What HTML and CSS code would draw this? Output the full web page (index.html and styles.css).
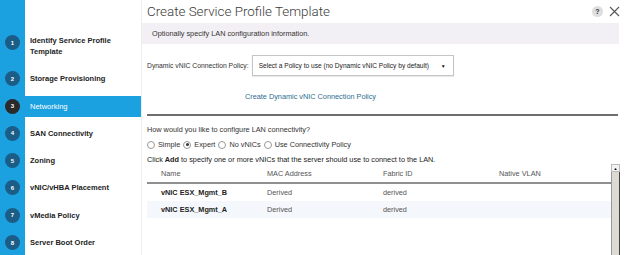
FILE: index.html
```html
<!DOCTYPE html>
<html lang="en">
<head>
  <meta charset="UTF-8" />
  <title>Create Service Profile Template</title>
  <link rel="stylesheet" href="styles.css">
</head>
<body>
  <nav class="steps">
    <div class="step step-tall"><span class="num">1</span><span class="label">Identify Service Profile<br>Template</span></div>
    <div class="step"><span class="num">2</span><span class="label">Storage Provisioning</span></div>
    <div class="step active"><span class="num">3</span><span class="label">Networking</span></div>
    <div class="step"><span class="num">4</span><span class="label">SAN Connectivity</span></div>
    <div class="step"><span class="num">5</span><span class="label">Zoning</span></div>
    <div class="step"><span class="num">6</span><span class="label">vNIC/vHBA Placement</span></div>
    <div class="step"><span class="num">7</span><span class="label">vMedia Policy</span></div>
    <div class="step"><span class="num">8</span><span class="label">Server Boot Order</span></div>
  </nav>

  <main class="wizard">
    <header class="wizard-head">
      <h1>Create Service Profile Template</h1>
      <div class="head-tools">
        <span class="help">?</span>
        <svg class="close" width="11" height="11" viewBox="0 0 11 11">
          <path d="M1 1 L10 10 M10 1 L1 10" stroke="#555" stroke-width="1.1" fill="none" />
        </svg>
      </div>
    </header>

    <div class="banner">Optionally specify LAN configuration information.</div>

    <div class="policy-row">
      <span class="policy-label">Dynamic vNIC Connection Policy:</span>
      <div class="select">
        <span>Select a Policy to use (no Dynamic vNIC Policy by default)</span>
        <span class="caret">&#9660;</span>
      </div>
    </div>

    <a class="create-link" href="#">Create Dynamic vNIC Connection Policy</a>

    <hr class="divider">

    <p class="question">How would you like to configure LAN connectivity?</p>

    <div class="radios">
      <label class="radio"><span class="dot"></span>Simple</label>
      <label class="radio"><span class="dot checked"></span>Expert</label>
      <label class="radio"><span class="dot"></span>No vNICs</label>
      <label class="radio"><span class="dot"></span>Use Connectivity Policy</label>
    </div>

    <p class="hint">Click <b>Add</b> to specify one or more vNICs that the server should use to connect to the LAN.</p>

    <div class="table-wrap">
      <div class="table">
        <div class="row head">
          <span>Name</span><span>MAC Address</span><span>Fabric ID</span><span>Native VLAN</span>
        </div>
        <div class="row">
          <span class="name">vNIC ESX_Mgmt_B</span><span>Derived</span><span>derived</span><span></span>
        </div>
        <div class="row alt">
          <span class="name">vNIC ESX_Mgmt_A</span><span>Derived</span><span>derived</span><span></span>
        </div>
      </div>
      <div class="scrollbar">
        <span class="arrow">&#9650;</span>
        <span class="track"></span>
      </div>
    </div>
  </main>
</body>
</html>
```

FILE: styles.css
```css
* {
  margin: 0;
  padding: 0;
  box-sizing: border-box;
}

body {
  font-family: 'Liberation Sans', Arial, sans-serif;
  font-size: 7.3px;
  color: #333;
  background: #fff;
  width: 625px;
  height: 255px;
  overflow: hidden;
  display: flex;
}

/* left wizard steps */
.steps {
  width: 142px;
  flex-shrink: 0;
  background: linear-gradient(to right, #1ba0e0 25px, #fff 25px);
  padding-top: 30px;
  display: flex;
  flex-direction: column;
  gap: 6.3px;
  border-right: 1px solid #eee;
}

.step {
  display: flex;
  align-items: center;
  min-height: 21px;
  font-weight: bold;
  font-size: 7.5px;
  color: #222;
}

.step-tall {
  padding: 5px 0;
  align-items: flex-start;
}

.step .num {
  width: 15px;
  height: 15px;
  border-radius: 50%;
  background: #1b5d86;
  color: #fff;
  font-size: 6px;
  display: flex;
  align-items: center;
  justify-content: center;
  margin: 0 10px 0 5px;
  flex-shrink: 0;
}

.step .label {
  line-height: 11px;
}

.step.active {
  background: #1ba0e0;
}

.step.active .num {
  background: #2a2a2a;
}

.step.active .label {
  color: #fff;
  font-weight: normal;
}

/* main panel */
.wizard {
  flex: 1;
  display: flex;
  flex-direction: column;
  padding-left: 5px;
}

.wizard-head {
  height: 23px;
  display: flex;
  align-items: center;
  justify-content: space-between;
  padding-right: 5px;
}

.wizard-head h1 {
  font-family: Roboto, 'Liberation Sans', sans-serif;
  font-weight: 300;
  font-size: 13.4px;
  color: #3a3a3a;
}

.head-tools {
  display: flex;
  align-items: center;
  gap: 6px;
}

.help {
  width: 11px;
  height: 11px;
  border-radius: 50%;
  background: #dedede;
  font-weight: bold;
  font-size: 7px;
  color: #333;
  display: flex;
  align-items: center;
  justify-content: center;
}

.banner {
  height: 21px;
  margin-left: -5px;
  margin-right: 6px;
  padding-left: 10px;
  background: #f3f0f5;
  display: flex;
  align-items: center;
  color: #333;
}

.policy-row {
  display: flex;
  align-items: center;
  margin-top: 11px;
  gap: 3px;
  white-space: nowrap;
  font-size: 6.8px;
}

.select {
  width: 202px;
  height: 21px;
  border: 1px solid #c4c4c4;
  box-shadow: 0 1px 1px rgba(0, 0, 0, 0.08);
  display: flex;
  align-items: center;
  justify-content: space-between;
  padding: 0 7px 0 6px;
  color: #222;
  font-size: 6.6px;
}

.caret {
  font-size: 5px;
}

.create-link {
  margin: 16px 0 0 98px;
  color: #2c6e90;
  text-decoration: none;
  line-height: 9px;
}

.divider {
  border: none;
  border-top: 2px solid #6e6e6e;
  margin: 13px 7px 0 0;
}

.question {
  margin-top: 9px;
}

.radios {
  display: flex;
  align-items: center;
  margin-top: 6px;
  gap: 3px;
}

.radio {
  display: flex;
  align-items: center;
  gap: 3px;
}

.dot {
  width: 8px;
  height: 8px;
  border: 1px solid #999;
  border-radius: 50%;
  display: flex;
  align-items: center;
  justify-content: center;
  background: #fff;
}

.dot.checked::after {
  content: '';
  width: 3px;
  height: 3px;
  border-radius: 50%;
  background: #333;
}

.hint {
  margin-top: 6px;
  color: #222;
}

.hint b {
  font-weight: bold;
}

.table-wrap {
  display: flex;
  flex: 1;
  padding-right: 5px;
}

.table {
  flex: 1;
  margin-top: 1px;
}

.row {
  display: grid;
  grid-template-columns: 106px 116px 116px 1fr;
  padding-left: 14px;
  height: 17px;
  align-items: center;
  color: #555;
}

.row.head {
  height: 19px;
  border-bottom: 2px solid #8f8f8f;
}

.row.alt {
  background: #f4f7fb;
}

.row .name {
  font-weight: bold;
  color: #222;
}

.scrollbar {
  width: 9px;
  display: flex;
  flex-direction: column;
}

.arrow {
  height: 8px;
  font-size: 4px;
  display: flex;
  align-items: center;
  justify-content: center;
  background: #f2f2f2;
  border: 1px solid #bbb;
  color: #000;
}

.track {
  flex: 1;
  background: #ddd9d3;
  border-left: 1px solid #999;
  border-right: 1px solid #444;
}
```
